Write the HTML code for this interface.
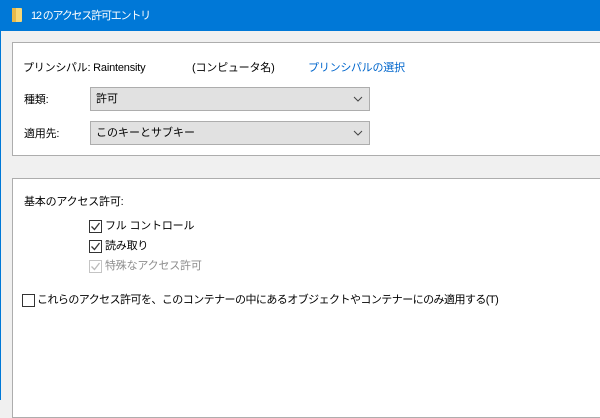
<!DOCTYPE html>
<html><head><meta charset="utf-8"><style>
*{margin:0;padding:0;box-sizing:border-box}
body{width:600px;height:400px;overflow:hidden;background:#f0f0f0;font-family:"Liberation Sans","Noto Sans CJK JP",sans-serif;font-size:11px;color:#000;position:relative}
.a{position:absolute;white-space:nowrap;line-height:14px;letter-spacing:-0.2px}
.title{position:absolute;left:0;top:0;width:600px;height:31px;background:#0078d7;color:#fff}
.lb{position:absolute;left:0;top:31px;width:1px;height:369px;background:#0078d7}
.panel{position:absolute;left:12px;right:-5px;background:#fff;border:1px solid #adadad}
.dd{position:absolute;left:90px;width:280px;height:24px;background:#e1e1e1;border:1px solid #adadad;padding:4px 0 0 5px;font-size:11px;line-height:14px}
.dd svg{position:absolute;right:6px;top:8px}
.cb{position:absolute;width:13px;height:13px;border:1px solid #333;background:#fff}
.cb svg{position:absolute;left:0px;top:0px}
</style></head><body>
<div class="title">
<div style="position:absolute;left:12px;top:8px;width:10px;height:14px;background:#f8d775;border-radius:1px"></div>
<div style="position:absolute;left:12px;top:8px;width:4px;height:14px;background:#e8b94a"></div>
<div class="a" style="left:31px;top:9px;color:#fff;font-size:11px;letter-spacing:-1.2px">12 のアクセス許可エントリ</div>
</div>
<div class="lb"></div>
<div class="panel" style="top:42px;height:114px"></div>
<div class="panel" style="top:178px;height:240px"></div>
<div class="a" style="left:23px;top:61px">プリンシパル: Raintensity</div>
<div class="a" style="left:192px;top:61px">(コンピュータ名)</div>
<div class="a" style="left:308px;top:61px;color:#0066cc">プリンシパルの選択</div>
<div class="a" style="left:24px;top:93px">種類:</div>
<div class="dd" style="top:87px">許可<svg width="10" height="6"><path d="M1 1L5 5L9 1" stroke="#444" fill="none"/></svg></div>
<div class="a" style="left:24px;top:127px">適用先:</div>
<div class="dd" style="top:121px">このキーとサブキー<svg width="10" height="6"><path d="M1 1L5 5L9 1" stroke="#444" fill="none"/></svg></div>
<div class="a" style="left:24px;top:195px">基本のアクセス許可:</div>
<div class="cb" style="left:89px;top:220px"><svg width="11" height="11"><path d="M1.5 5.5L4.5 8.5L9.5 2" stroke="#333" stroke-width="1.3" fill="none"/></svg></div>
<div class="a" style="left:105px;top:219px">フル コントロール</div>
<div class="cb" style="left:89px;top:240px"><svg width="11" height="11"><path d="M1.5 5.5L4.5 8.5L9.5 2" stroke="#333" stroke-width="1.3" fill="none"/></svg></div>
<div class="a" style="left:105px;top:239px">読み取り</div>
<div class="cb" style="left:89px;top:260px;border-color:#c4c4c4"><svg width="11" height="11"><path d="M1.5 5.5L4.5 8.5L9.5 2" stroke="#bbb" stroke-width="1.3" fill="none"/></svg></div>
<div class="a" style="left:105px;top:259px;color:#8d8d8d">特殊なアクセス許可</div>
<div class="cb" style="left:22px;top:294px"></div>
<div class="a" style="left:37px;top:293px;letter-spacing:-0.55px">これらのアクセス許可を、このコンテナーの中にあるオブジェクトやコンテナーにのみ適用する(T)</div>
</body></html>
